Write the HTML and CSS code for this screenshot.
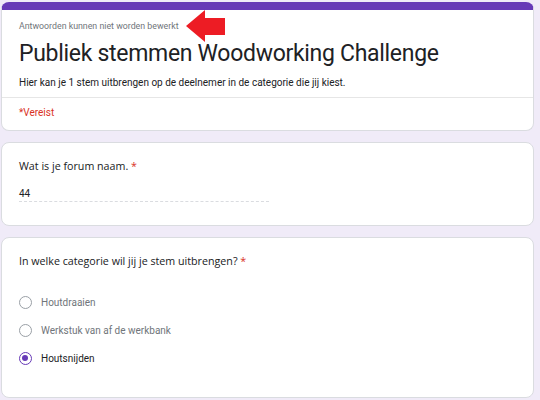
FILE: index.html
```html
<!DOCTYPE html>
<html lang="nl">
<head>
<meta charset="utf-8">
<link rel="stylesheet" href="styles.css">
</head>
<body>
<div class="page">
  <section class="card head-card">
    <div class="head-main">
      <div class="note-row">
        <span class="note">Antwoorden kunnen niet worden bewerkt</span>
        <svg class="arrow" width="40" height="32" viewBox="0 0 40 32"><polygon points="0,16 19,0 19,8 39,8 39,25 19,25 19,32" fill="#ed1c24"/></svg>
      </div>
      <h1 class="title">Publiek stemmen Woodworking Challenge</h1>
      <p class="desc">Hier kan je 1 stem uitbrengen op de deelnemer in de categorie die jij kiest.</p>
    </div>
    <div class="required-row">*Vereist</div>
  </section>

  <section class="card q-card">
    <div class="question">Wat is je forum naam. <span class="star">*</span></div>
    <div class="answer">44</div>
  </section>

  <section class="card q-card radio-card">
    <div class="question">In welke categorie wil jij je stem uitbrengen? <span class="star">*</span></div>
    <ul class="options">
      <li class="option"><span class="radio"></span><span class="opt-label">Houtdraaien</span></li>
      <li class="option"><span class="radio"></span><span class="opt-label">Werkstuk van af de werkbank</span></li>
      <li class="option selected"><span class="radio"></span><span class="opt-label">Houtsnijden</span></li>
    </ul>
  </section>
</div>
</body>
</html>
```

FILE: styles.css
```css
html, body {
  margin: 0;
  padding: 0;
  background: #f0ebf8;
  font-family: Roboto, "Liberation Sans", sans-serif;
}

.page {
  width: 533px;
  margin-left: 1px;
  padding-top: 2px;
  display: flex;
  flex-direction: column;
  gap: 11px;
}

.card {
  background: #ffffff;
  border: 1px solid #dadce0;
  border-radius: 8px;
  box-sizing: border-box;
}

.head-card {
  border-top: 8px solid #673ab7;
  height: 129px;
}

.head-main {
  padding: 0 17px;
  border-bottom: 1px solid #e6e6e6;
  height: 88px;
  box-sizing: border-box;
}

.note-row {
  display: flex;
  align-items: center;
  height: 32px;
  gap: 7px;
}

.note {
  font-size: 8.8px;
  color: #70757a;
  margin-top: -1px;
  white-space: nowrap;
}

.arrow {
  display: block;
}

.title {
  margin: -2px 0 0;
  font-family: Roboto, "Open Sans", sans-serif;
  font-weight: 400;
  font-size: 23px;
  line-height: 28px;
  letter-spacing: -0.3px;
  color: #202124;
  white-space: nowrap;
}

.desc {
  margin: 8px 0 0;
  font-size: 10px;
  line-height: 14px;
  color: #202124;
  white-space: nowrap;
}

.required-row {
  padding: 8px 17px;
  font-size: 10px;
  line-height: 14px;
  color: #d93025;
}

.q-card {
  height: 84px;
  padding: 15px 17px 0;
}

.question {
  font-family: "Open Sans", Roboto, sans-serif;
  font-size: 10.7px;
  line-height: 16px;
  color: #202124;
}

.star {
  color: #d93025;
}

.answer {
  margin-top: 13px;
  width: 250px;
  font-size: 10px;
  line-height: 14px;
  color: #202124;
  border-bottom: 1px dashed #dadce0;
}

.radio-card {
  height: 161px;
}

.options {
  list-style: none;
  margin: 26px 0 0;
  padding: 0;
  display: flex;
  flex-direction: column;
  gap: 14px;
}

.option {
  display: flex;
  align-items: center;
  gap: 9px;
  height: 14px;
}

.radio {
  width: 13px;
  height: 13px;
  border: 1.5px solid #9aa0a6;
  border-radius: 50%;
  box-sizing: border-box;
  position: relative;
  flex: none;
}

.opt-label {
  font-size: 10px;
  color: #70757a;
}

.selected .radio {
  border-color: #673ab7;
}

.selected .radio::after {
  content: "";
  position: absolute;
  left: 2px;
  top: 2px;
  width: 6px;
  height: 6px;
  border-radius: 50%;
  background: #673ab7;
}

.selected .opt-label {
  color: #202124;
}
```
